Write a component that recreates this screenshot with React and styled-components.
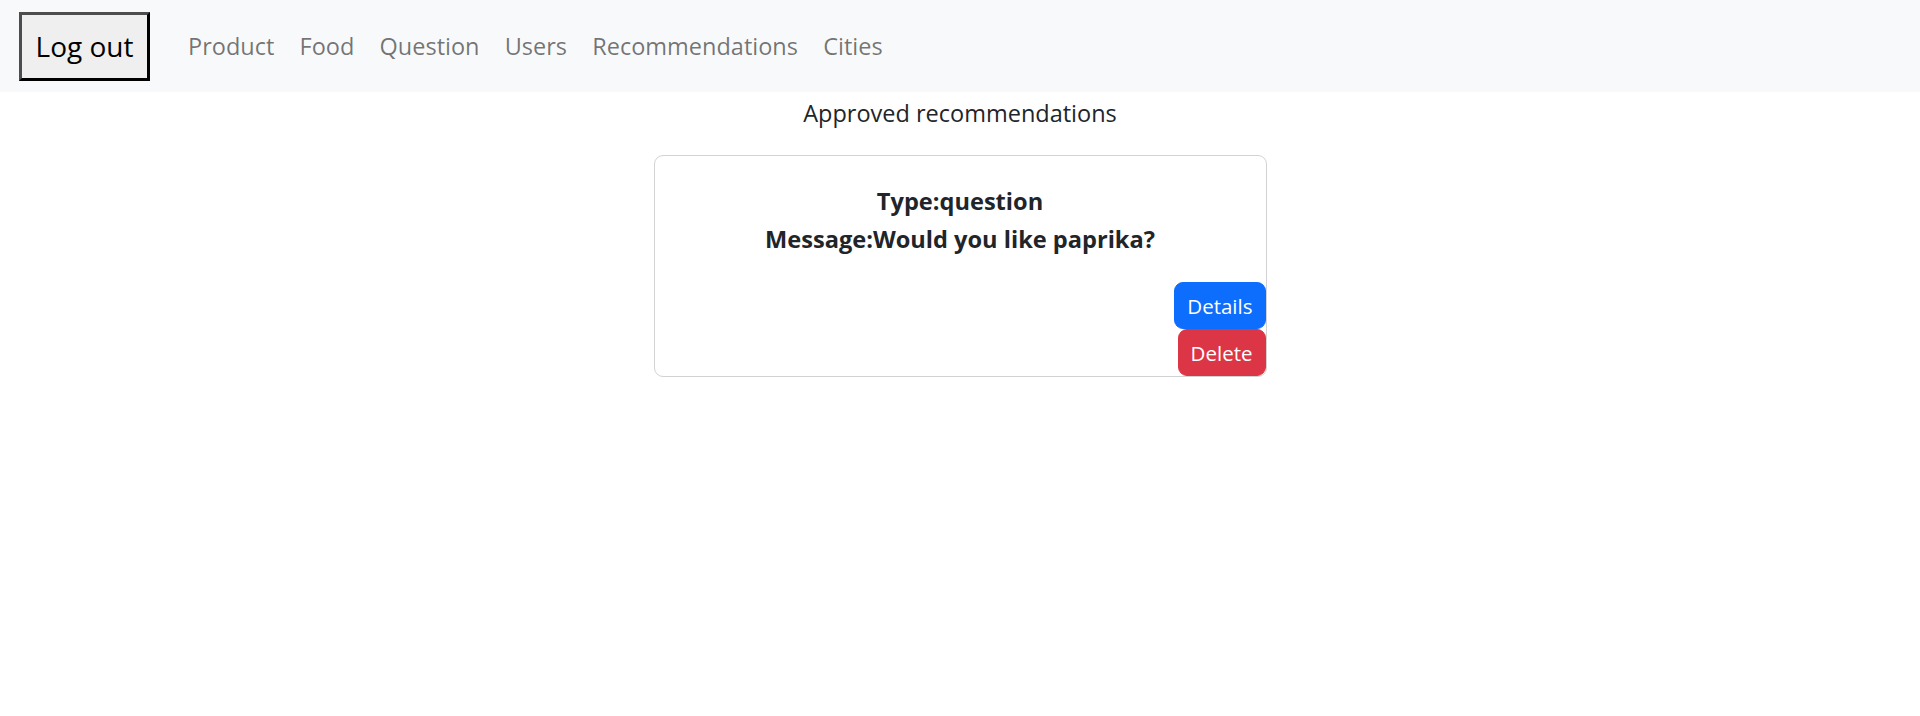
import React from 'react';
import styled, { createGlobalStyle } from 'styled-components';

const GlobalStyle = createGlobalStyle`
  body {
    margin: 0;
    background: #fff;
    font-family: "Segoe UI", "Open Sans", "Noto Sans", sans-serif;
    color: #212529;
  }
`;

const links = ['Product', 'Food', 'Question', 'Users', 'Recommendations', 'Cities'];

export default function App() {
  return (
    <>
      <GlobalStyle />
      <Navbar>
        <LogoutButton>Log out</LogoutButton>
        <NavList>
          {links.map(l => <NavLink key={l}>{l}</NavLink>)}
        </NavList>
      </Navbar>
      <Main>
        <Heading>Approved recommendations</Heading>
        <Card>
          <CardBody>
            <CardLine>Type:question</CardLine>
            <CardLine>Message:Would you like paprika?</CardLine>
          </CardBody>
          <Actions>
            <Btn variant="primary">Details</Btn>
            <Btn variant="danger">Delete</Btn>
          </Actions>
        </Card>
      </Main>
    </>
  );
}

const Navbar = styled.nav`
  display: flex;
  align-items: center;
  height: 92px;
  padding: 0 19px;
  background: #f8f9fa;
`

const LogoutButton = styled.button`
  width: 131px;
  height: 69px;
  padding: 0;
  font-family: inherit;
  font-size: 28px;
  color: #000;
  background: #efefef;
  border: 3px solid;
  border-color: #4d4d4d #000 #000 #4d4d4d;
`

const NavList = styled.div`
  display: flex;
  margin-left: 25.5px;
`

const NavLink = styled.a`
  padding: 12px 12.6px;
  font-size: 23.5px;
  color: rgba(0, 0, 0, 0.55);
  cursor: pointer;
`

const Main = styled.main`
  display: flex;
  flex-direction: column;
  align-items: center;
`

const Heading = styled.div`
  margin: 3px 0 24px;
  font-size: 23.5px;
  line-height: 36px;
`

const Card = styled.div`
  width: 613px;
  box-sizing: border-box;
  border: 1px solid rgba(0, 0, 0, 0.175);
  border-radius: 9px;
  display: flex;
  flex-direction: column;
`

const CardBody = styled.div`
  padding: 26px 24px 24px;
  text-align: center;
`

const CardLine = styled.div`
  font-size: 23.6px;
  font-weight: 700;
  line-height: 38px;
`

const Actions = styled.div`
  display: flex;
  flex-direction: column;
  align-items: flex-end;
`

const Btn = styled.button`
  height: 47px;
  padding: 0 12px;
  font-family: inherit;
  font-size: 20.5px;
  color: #fff;
  border: 1px solid ${p => p.variant === 'danger' ? '#dc3545' : '#0d6efd'};
  background: ${p => p.variant === 'danger' ? '#dc3545' : '#0d6efd'};
  border-radius: 9px;
  cursor: pointer;
`
